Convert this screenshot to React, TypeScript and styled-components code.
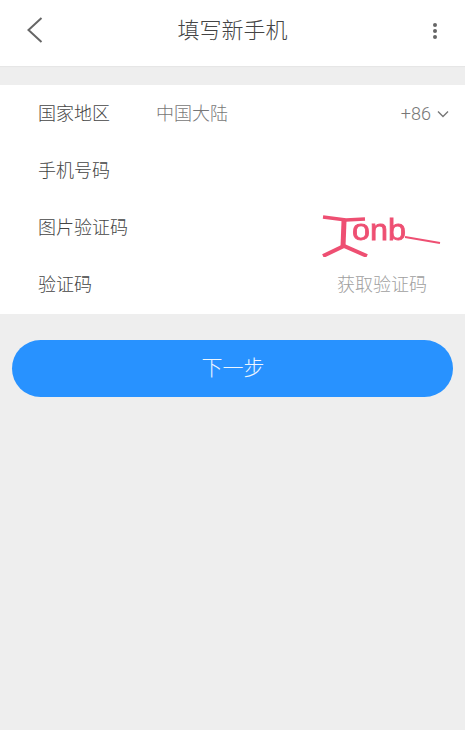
import styled, { createGlobalStyle } from "styled-components";

const GlobalStyle = createGlobalStyle`
  html, body {
    margin: 0;
    padding: 0;
    height: 100%;
    background: #eeeeee;
    font-family: "Noto Sans CJK SC", "Liberation Sans", sans-serif;
    font-weight: 300;
  }
`;

export default function App() {
  return (
    <>
      <GlobalStyle />
      <Page>
        <Header>
          <BackBtn>
            <svg width="18" height="28" viewBox="0 0 18 28" fill="none">
              <path d="M15.5 2 L2.5 14 L15.5 26" stroke="#666" strokeWidth="2" />
            </svg>
          </BackBtn>
          <Title>填写新手机</Title>
          <MoreBtn>
            <Dot />
            <Dot />
            <Dot />
          </MoreBtn>
        </Header>

        <Form>
          <Row>
            <Label>国家地区</Label>
            <Value>中国大陆</Value>
            <Code>
              +86
              <svg width="12" height="8" viewBox="0 0 12 8" fill="none">
                <path d="M1 1.5 L6 6.5 L11 1.5" stroke="#777" strokeWidth="1.4" />
              </svg>
            </Code>
          </Row>
          <Row>
            <Label>手机号码</Label>
          </Row>
          <Row>
            <Label>图片验证码</Label>
            <Captcha />
          </Row>
          <Row>
            <Label>验证码</Label>
            <GetCode>获取验证码</GetCode>
          </Row>
        </Form>

        <NextBtn>下一步</NextBtn>
      </Page>
    </>
  );
}

const Captcha = () => (
  <CaptchaBox>
    <svg width="135" height="58" viewBox="0 0 135 58" fill="none">
      <path d="M13 18 L36 21 L55 20" stroke="#ee4f72" strokeWidth="3.5" />
      <path d="M34 22 L33 48" stroke="#ee4f72" strokeWidth="5" />
      <path d="M13 57 L34 47 L57 57" stroke="#ee4f72" strokeWidth="4" />
      <CaptchaText x="42" y="41" textLength="54" lengthAdjust="spacingAndGlyphs">
        onb
      </CaptchaText>
      <path d="M95 38 L130 44" stroke="#ee4f72" strokeWidth="2" />
    </svg>
  </CaptchaBox>
);

const Page = styled.div`
  min-height: 730px;
  background: #eeeeee;
`;

const Header = styled.header`
  position: relative;
  display: flex;
  align-items: center;
  justify-content: center;
  height: 66px;
  background: #ffffff;
  box-shadow: 0 1px 1px #e6e6e6;
`;

const Title = styled.h1`
  margin: 0 0 11px;
  font-size: 22px;
  font-weight: 300;
  line-height: 30px;
  color: #444444;
`;

const BackBtn = styled.div`
  position: absolute;
  top: 16px;
  left: 26px;
  display: flex;
`;

const MoreBtn = styled.div`
  position: absolute;
  top: 23px;
  right: 28px;
  display: flex;
  flex-direction: column;
  gap: 2px;
`;

const Dot = styled.span`
  width: 4px;
  height: 4px;
  border-radius: 50%;
  background: #666666;
`;

const Form = styled.section`
  margin-top: 19px;
  padding: 0 25px 0 38px;
  background: #ffffff;
`;

const Row = styled.div`
  display: flex;
  align-items: center;
  height: 57px;
  font-size: 18px;
  line-height: 24px;
  &:last-child {
    height: 58px;
  }
`;

const Label = styled.span`
  width: 118px;
  flex-shrink: 0;
  margin-bottom: 4px;
  color: #444444;
`;

const Value = styled.span`
  margin-bottom: 4px;
  color: #777777;
`;

const Code = styled.span`
  display: flex;
  align-items: center;
  gap: 6px;
  margin-left: auto;
  margin-right: -9px;
  font-family: "Roboto", "Liberation Sans", sans-serif;
  font-weight: 300;
  color: #777777;
`;

const GetCode = styled.span`
  margin-left: auto;
  margin-right: 13px;
  margin-bottom: 4px;
  color: #a0a0a0;
`;

const CaptchaBox = styled.div`
  display: flex;
  margin-left: auto;
  margin-right: -5px;
  height: 58px;
  filter: blur(0.5px);
`;

const CaptchaText = styled.text`
  font-family: "Liberation Sans", sans-serif;
  font-size: 30px;
  font-weight: 400;
  fill: #ee4f72;
  stroke: #ee4f72;
  stroke-width: 0.8px;
`;

const NextBtn = styled.button`
  display: block;
  width: 441px;
  height: 57px;
  margin: 26px 12px 0;
  padding: 0 0 5px 1px;
  border: 0;
  border-radius: 29px;
  background: #2892ff;
  color: #eef6ff;
  font-family: inherit;
  font-size: 21px;
  font-weight: 300;
`;
